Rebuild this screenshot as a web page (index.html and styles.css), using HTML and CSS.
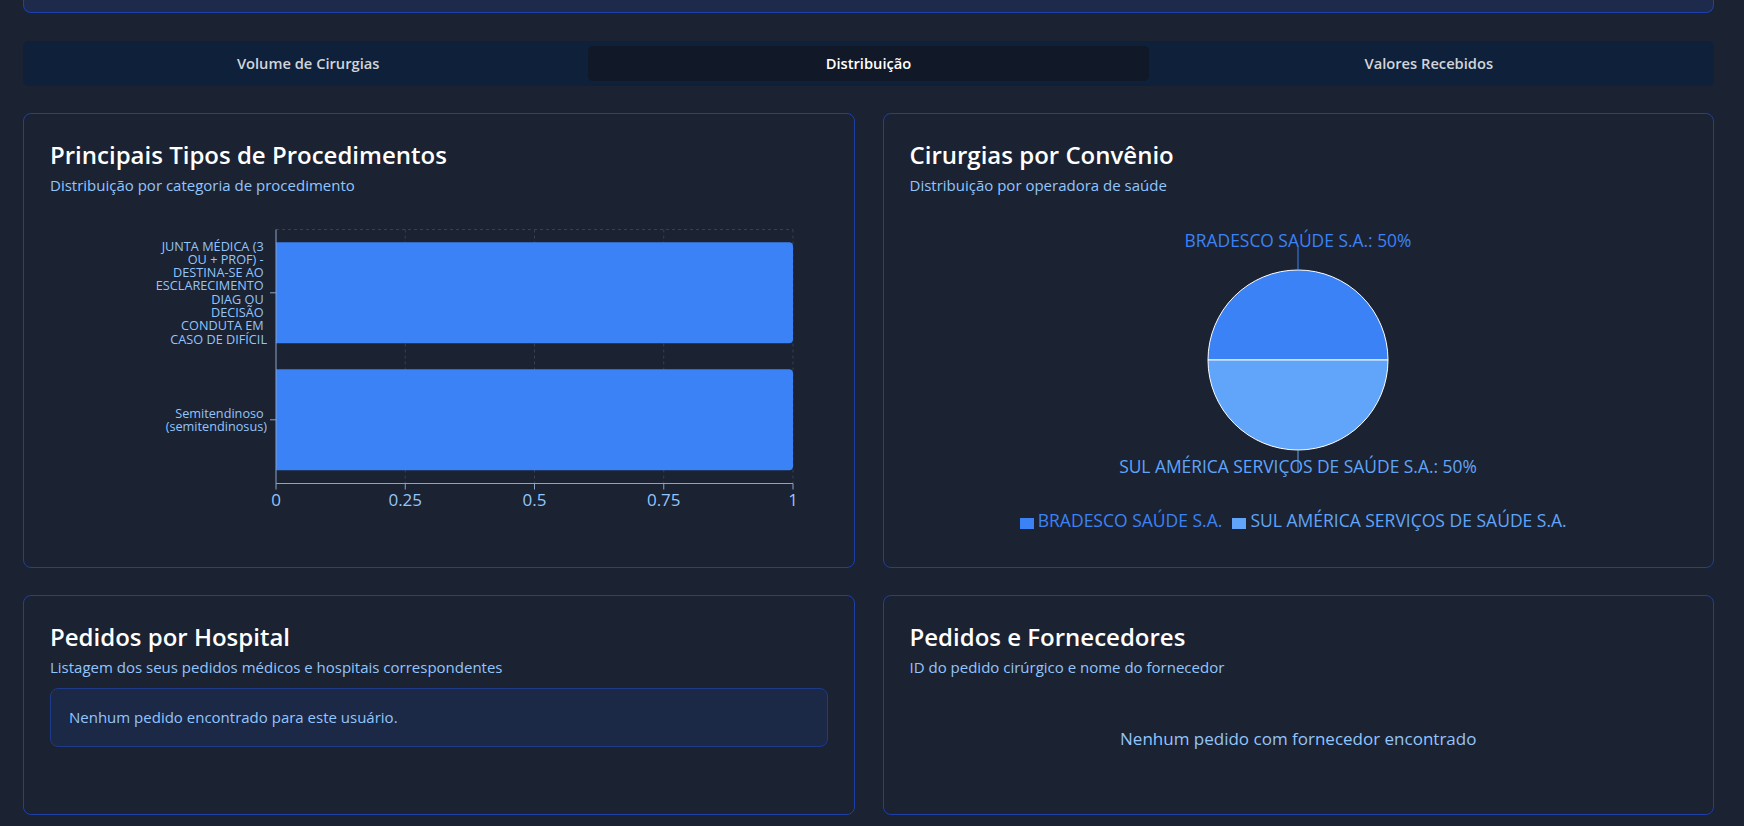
FILE: index.html
```html
<!DOCTYPE html>
<html lang="pt-BR">
<head>
<meta charset="utf-8">
<title>Distribuição</title>
<link rel="stylesheet" href="styles.css">
</head>
<body>
<div class="page">
  <div class="top-card"></div>

  <nav class="tabs">
    <button class="tab">Volume de Cirurgias</button>
    <button class="tab active">Distribuição</button>
    <button class="tab">Valores Recebidos</button>
  </nav>

  <div class="grid">
    <section class="card">
      <header>
        <h2 class="card-title">Principais Tipos de Procedimentos</h2>
        <p class="card-desc">Distribuição por categoria de procedimento</p>
      </header>
      <div class="chart">
        <svg class="bar-chart" width="776" height="334" viewBox="0 0 776 334">
          <g class="grid-lines">
            <line x1="226" y1="22.5" x2="743" y2="22.5"/>
            <line x1="355.25" y1="22.5" x2="355.25" y2="276.5"/>
            <line x1="484.5" y1="22.5" x2="484.5" y2="276.5"/>
            <line x1="613.75" y1="22.5" x2="613.75" y2="276.5"/>
            <line x1="743" y1="22.5" x2="743" y2="276.5"/>
          </g>
          <path class="bar" d="M226,35.3 h513 a4,4 0 0 1 4,4 v93 a4,4 0 0 1 -4,4 h-513 z"/>
          <path class="bar" d="M226,162.3 h513 a4,4 0 0 1 4,4 v93 a4,4 0 0 1 -4,4 h-513 z"/>
          <g class="axis">
            <line x1="226" y1="22.5" x2="226" y2="276.5"/>
            <line x1="220" y1="85.8" x2="226" y2="85.8"/>
            <line x1="220" y1="212.8" x2="226" y2="212.8"/>
            <line x1="226" y1="276.5" x2="743" y2="276.5"/>
            <line x1="226" y1="276.5" x2="226" y2="282.5"/>
            <line x1="355.25" y1="276.5" x2="355.25" y2="282.5"/>
            <line x1="484.5" y1="276.5" x2="484.5" y2="282.5"/>
            <line x1="613.75" y1="276.5" x2="613.75" y2="282.5"/>
            <line x1="743" y1="276.5" x2="743" y2="282.5"/>
          </g>
          <g class="x-ticks">
            <text x="226" y="299">0</text>
            <text x="355.25" y="299">0.25</text>
            <text x="484.5" y="299">0.5</text>
            <text x="613.75" y="299">0.75</text>
            <text x="743" y="299">1</text>
          </g>
          <text class="y-tick" x="217" y="43.5">
            <tspan x="217" dy="0">JUNTA MÉDICA (3</tspan>
            <tspan x="217" dy="13.33">OU + PROF) -</tspan>
            <tspan x="217" dy="13.33">DESTINA-SE AO</tspan>
            <tspan x="217" dy="13.33">ESCLARECIMENTO</tspan>
            <tspan x="217" dy="13.33">DIAG OU</tspan>
            <tspan x="217" dy="13.33">DECISÃO</tspan>
            <tspan x="217" dy="13.33">CONDUTA EM</tspan>
            <tspan x="217" dy="13.33">CASO DE DIFÍCIL</tspan>
          </text>
          <text class="y-tick" x="217" y="210.5">
            <tspan x="217" dy="0">Semitendinoso</tspan>
            <tspan x="217" dy="13.33">(semitendinosus)</tspan>
          </text>
        </svg>
      </div>
    </section>

    <section class="card">
      <header>
        <h2 class="card-title">Cirurgias por Convênio</h2>
        <p class="card-desc">Distribuição por operadora de saúde</p>
      </header>
      <div class="chart pie-block">
        <svg class="pie-chart" width="400" height="301" viewBox="0 0 400 301">
          <path class="slice-a" d="M200,153 L110,153 A90,90 0 0 1 290,153 Z"/>
          <path class="slice-b" d="M200,153 L290,153 A90,90 0 0 1 110,153 Z"/>
          <line class="lbl-line-a" x1="200" y1="63" x2="200" y2="40"/>
          <line class="lbl-line-b" x1="200" y1="243" x2="200" y2="266"/>
          <text class="pie-label label-a" x="200" y="40">BRADESCO SAÚDE S.A.: 50%</text>
          <text class="pie-label label-b" x="200" y="266">SUL AMÉRICA SERVIÇOS DE SAÚDE S.A.: 50%</text>
        </svg>
        <ul class="legend">
          <li class="legend-item item-a"><span class="legend-icon"></span>BRADESCO SAÚDE S.A.</li>
          <li class="legend-item item-b"><span class="legend-icon"></span>SUL AMÉRICA SERVIÇOS DE SAÚDE S.A.</li>
        </ul>
      </div>
    </section>

    <section class="card">
      <header>
        <h2 class="card-title">Pedidos por Hospital</h2>
        <p class="card-desc">Listagem dos seus pedidos médicos e hospitais correspondentes</p>
      </header>
      <div class="notice">Nenhum pedido encontrado para este usuário.</div>
    </section>

    <section class="card">
      <header>
        <h2 class="card-title">Pedidos e Fornecedores</h2>
        <p class="card-desc">ID do pedido cirúrgico e nome do fornecedor</p>
      </header>
      <div class="empty">Nenhum pedido com fornecedor encontrado</div>
    </section>
  </div>
</div>
</body>
</html>
```

FILE: styles.css
```css
* {
  box-sizing: border-box;
  margin: 0;
  padding: 0;
}

html,
body {
  background: #1b2231;
}

body {
  font-family: "Open Sans", "Noto Sans", sans-serif;
  color: #ffffff;
}

.page {
  padding: 0 30px 0 23px;
}

.top-card {
  height: 13px;
  background: #1e2a4c;
  border: 1px solid #1e40af;
  border-top: none;
  border-radius: 0 0 8px 8px;
}

.tabs {
  margin-top: 28px;
  height: 45px;
  display: flex;
  padding: 5px;
  background: #0f203a;
  border-radius: 6px;
}

.tab {
  flex: 1;
  border: 0;
  background: transparent;
  font-family: "Open Sans", "Noto Sans", sans-serif;
  font-size: 14.7px;
  font-weight: 600;
  line-height: 35px;
  color: #d1d5db;
  border-radius: 5px;
}

.tab.active {
  background: #111827;
  color: #ffffff;
}

.grid {
  margin-top: 27px;
  display: grid;
  grid-template-columns: 1fr 1fr;
  column-gap: 28px;
  row-gap: 27px;
}

.card {
  border: 1px solid #1e3fa8;
  border-radius: 8px;
  padding: 25px 26px 26px;
  background: #1b2231;
  display: flex;
  flex-direction: column;
}

.card-title {
  font-size: 24px;
  line-height: 32px;
  font-weight: 600;
  color: #ffffff;
}

.card-desc {
  margin-top: 4px;
  font-size: 15px;
  line-height: 20px;
  color: #93c5fd;
}

.chart {
  margin-top: 12px;
}

.bar-chart,
.pie-chart {
  display: block;
  font-family: "Open Sans", "Noto Sans", sans-serif;
}

.grid-lines line {
  stroke: #334155;
  stroke-width: 1;
  stroke-dasharray: 3 3;
}

.bar {
  fill: #3b82f6;
}

.axis line {
  stroke: #8ba3c7;
  stroke-width: 1;
}

.x-ticks text {
  fill: #93c5fd;
  font-size: 17px;
  text-anchor: middle;
}

.y-tick {
  fill: #93c5fd;
  font-size: 12.7px;
  text-anchor: end;
}

.pie-block {
  display: flex;
  flex-direction: column;
  align-items: center;
}

.slice-a {
  fill: #3b82f6;
  stroke: #ffffff;
  stroke-width: 1;
}

.slice-b {
  fill: #60a5fa;
  stroke: #ffffff;
  stroke-width: 1;
}

.lbl-line-a {
  stroke: #3b82f6;
}

.lbl-line-b {
  stroke: #60a5fa;
}

.pie-label {
  font-size: 17.4px;
  text-anchor: middle;
}

.label-a {
  fill: #3b82f6;
}

.label-b {
  fill: #60a5fa;
}

.legend {
  list-style: none;
  display: flex;
  justify-content: center;
  font-size: 17.5px;
  line-height: 24px;
  white-space: nowrap;
}

.legend-item {
  margin-right: 10px;
}

.legend-icon {
  display: inline-block;
  width: 14px;
  height: 11px;
  margin-right: 4px;
  vertical-align: -2px;
}

.item-a {
  color: #3b82f6;
}

.item-a .legend-icon {
  background: #3b82f6;
}

.item-b {
  color: #60a5fa;
}

.item-b .legend-icon {
  background: #60a5fa;
}

.notice {
  margin-top: 11px;
  padding: 16px 18px;
  line-height: 25px;
  font-size: 15px;
  color: #93c5fd;
  background: #1b2846;
  border: 1px solid #1e3a8a;
  border-radius: 8px;
}

.empty {
  margin-top: 11px;
  height: 100px;
  display: flex;
  align-items: center;
  justify-content: center;
  font-size: 17px;
  color: #93c5fd;
}
```
